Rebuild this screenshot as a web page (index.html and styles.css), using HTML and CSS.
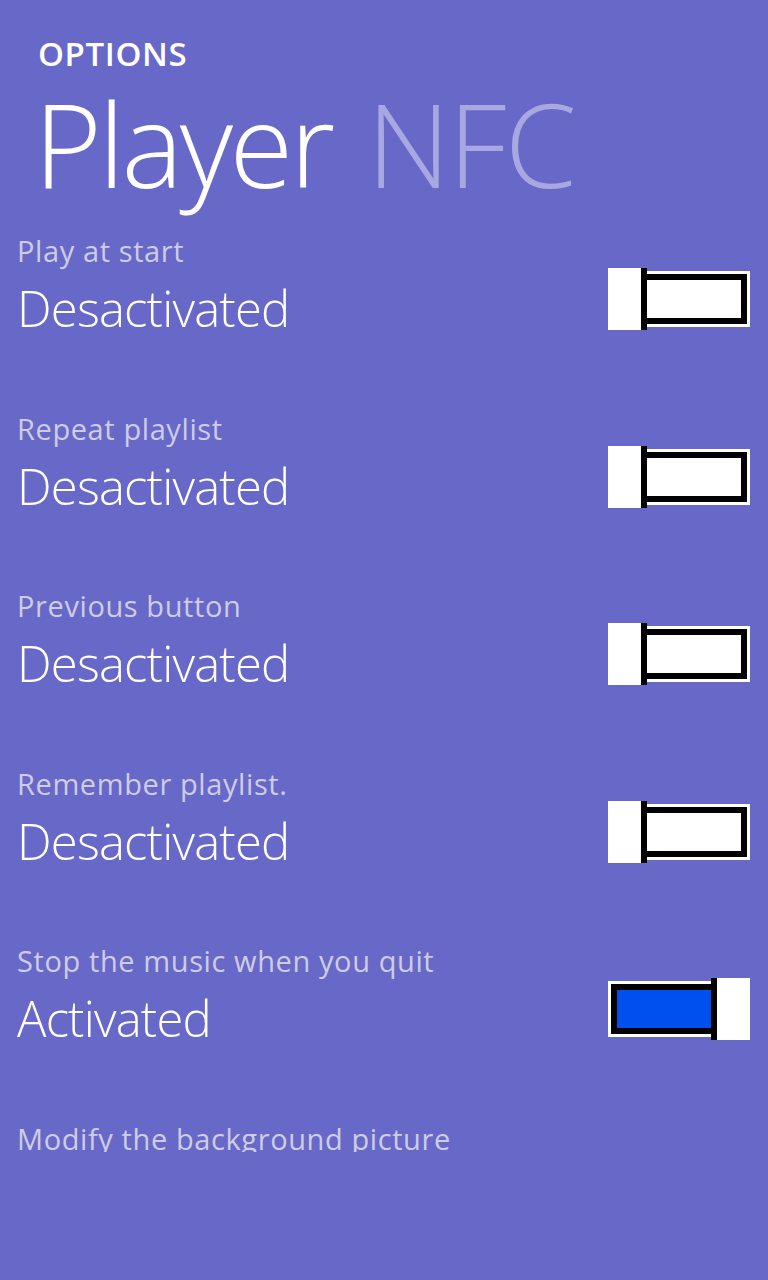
FILE: index.html
```html
<!DOCTYPE html>
<html lang="en">
<head>
<meta charset="utf-8">
<title>Player NFC - Options</title>
<link rel="stylesheet" href="styles.css">
</head>
<body>
<div class="page">
  <header class="header">
    <div class="app-title">OPTIONS</div>
    <div class="page-title">Player <span class="dim">NFC</span></div>
  </header>
  <div class="list">
    <div class="item">
      <div class="text">
        <div class="label">Play at start</div>
        <div class="value">Desactivated</div>
      </div>
      <div class="toggle off">
        <div class="thumb"></div><div class="bar"></div><div class="track"><div class="fill"></div></div>
      </div>
    </div>
    <div class="item">
      <div class="text">
        <div class="label">Repeat playlist</div>
        <div class="value">Desactivated</div>
      </div>
      <div class="toggle off">
        <div class="thumb"></div><div class="bar"></div><div class="track"><div class="fill"></div></div>
      </div>
    </div>
    <div class="item">
      <div class="text">
        <div class="label">Previous button</div>
        <div class="value">Desactivated</div>
      </div>
      <div class="toggle off">
        <div class="thumb"></div><div class="bar"></div><div class="track"><div class="fill"></div></div>
      </div>
    </div>
    <div class="item">
      <div class="text">
        <div class="label">Remember playlist.</div>
        <div class="value">Desactivated</div>
      </div>
      <div class="toggle off">
        <div class="thumb"></div><div class="bar"></div><div class="track"><div class="fill"></div></div>
      </div>
    </div>
    <div class="item">
      <div class="text">
        <div class="label">Stop the music when you quit</div>
        <div class="value">Activated</div>
      </div>
      <div class="toggle on">
        <div class="track"><div class="fill"></div></div><div class="bar"></div><div class="thumb"></div>
      </div>
    </div>
    <div class="item">
      <div class="text">
        <div class="label">Modify the background picture</div>
      </div>
    </div>
  </div>
</div>
</body>
</html>
```

FILE: styles.css
```css
html, body {
  margin: 0;
  padding: 0;
}
body {
  background: #6868c9;
  color: #ffffff;
  font-family: "Open Sans", "Noto Sans", "Liberation Sans", sans-serif;
  width: 768px;
  height: 1280px;
  overflow: hidden;
}
.page {
  display: flex;
  flex-direction: column;
}
.header {
  padding: 34px 0 0 38px;
}
.app-title {
  font-size: 33px;
  font-weight: 600;
  line-height: 40px;
  letter-spacing: 0.6px;
}
.page-title {
  margin-top: 9px;
  margin-left: -4px;
  font-size: 116px;
  font-weight: 300;
  line-height: 120px;
  letter-spacing: -3.3px;
  white-space: nowrap;
}
.dim {
  color: #a7a7e1;
  margin-left: 8px;
  letter-spacing: -2px;
}
.list {
  margin-top: 26px;
  padding: 4px 18px 0 17px;
  height: 919px;
  overflow: hidden;
}
.item {
  display: flex;
  justify-content: space-between;
  align-items: flex-start;
  height: 177.5px;
}
.label {
  font-size: 29px;
  line-height: 36px;
  color: #cdcde3;
  letter-spacing: 0.6px;
  white-space: nowrap;
}
.value {
  margin-top: 9px;
  font-size: 49px;
  line-height: 60px;
  font-weight: 300;
  letter-spacing: -0.8px;
  white-space: nowrap;
}
.toggle {
  margin-top: 35px;
  width: 142px;
  height: 62px;
  display: flex;
  align-items: center;
}
.thumb {
  width: 33px;
  height: 62px;
  background: #ffffff;
}
.bar {
  width: 6px;
  height: 62px;
  background: #000000;
}
.track {
  flex: 1;
  height: 56px;
  background: #ffffff;
  box-sizing: border-box;
  display: flex;
}
.toggle.off .track {
  padding: 3px 3px 3px 0;
}
.toggle.on .track {
  padding: 3px 0 3px 3px;
}
.fill {
  flex: 1;
  border: 6px solid #000000;
}
.toggle.off .fill {
  border-left: 0;
  background: #ffffff;
}
.toggle.on .fill {
  border-right: 0;
  background: #0050ef;
}
```
